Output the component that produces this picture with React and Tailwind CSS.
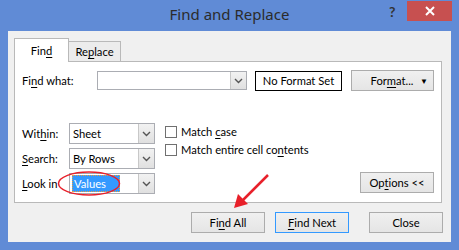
import React from 'react';

const U = ({ children }) => <span className="underline underline-offset-2">{children}</span>;

const Chevron = () => (
  <svg width="9" height="6" viewBox="0 0 9 6" fill="none" stroke="#555" strokeWidth="1.4">
    <path d="M1 1l3.5 3.5L8 1" />
  </svg>
);

const Select = ({ value, selected }) => (
  <div className="flex h-[21px] w-[86px] border border-[#abadb3] bg-white">
    <div className="flex flex-1 items-center pl-[2px]">
      {selected ? (
        <span className="h-[17px] w-[48px] border border-dotted border-[#e8a040] bg-[#3399ff] pl-[1px] leading-[15px] text-white">
          {value}
        </span>
      ) : (
        <span className="pl-[1px]">{value}</span>
      )}
    </div>
    <div className="flex w-[16px] items-center justify-center border-l border-[#c8c8c8] bg-gradient-to-b from-[#f2f2f2] to-[#e0e0e0]">
      <Chevron />
    </div>
  </div>
);

const Btn = ({ children, w = 'w-[74px]', focus }) => (
  <button
    className={`flex h-[21px] ${w} items-center justify-center border bg-gradient-to-b from-[#f0f0f0] to-[#e5e5e5] ${
      focus ? 'border-[#3399ff]' : 'border-[#acacac]'
    }`}
  >
    {children}
  </button>
);

const Check = ({ children }) => (
  <div className="flex h-[12px] items-center gap-[4px]">
    <div className="h-[12px] w-[12px] border border-[#707070] bg-white" />
    <span>{children}</span>
  </div>
);

export default function App() {
  return (
    <div
      className="relative h-[250px] w-[459px] bg-[#608bd6] text-[11.2px] leading-[16px] text-black"
      style={{ fontFamily: 'Lato, "Noto Sans", sans-serif' }}
    >
      {/* title bar */}
      <div className="relative flex h-[31px] items-center justify-center pb-[3px]">
        <span className="text-[15px] text-[#2b2b2b]" style={{ fontFamily: '"Noto Sans", sans-serif' }}>
          Find and Replace
        </span>
        <span className="absolute left-[389px] top-[4px] text-[14px] font-bold text-[#333]">?</span>
        <div className="absolute left-[407px] top-[1px] flex h-[20px] w-[45px] items-center justify-center bg-[#c75050]">
          <svg width="10" height="10" viewBox="0 0 10 10" stroke="white" strokeWidth="2">
            <path d="M1 1l8 8M9 1l-8 8" />
          </svg>
        </div>
      </div>

      {/* client */}
      <div className="mx-[8px] h-[211px] bg-[#f0f0f0] px-[6px] pt-[7px]">
        {/* tabs */}
        <div className="flex h-[23px] items-end">
          <div className="relative z-10 -mb-px flex h-[24px] w-[55px] items-center justify-center border border-b-0 border-[#b9b9b9] bg-white">
            Fin<U>d</U>
          </div>
          <div className="flex h-[20px] w-[52px] items-center justify-center border border-b-0 border-l-0 border-[#b9b9b9] bg-[#ececec]">
            Re<U>p</U>lace
          </div>
        </div>

        {/* panel */}
        <div className="h-[142px] w-[428px] border border-[#b9b9b9] bg-white px-[7px] pt-[8px]">
          <div className="flex items-center">
            <span className="w-[75px]">
              Fi<U>n</U>d what:
            </span>
            <div className="flex h-[19px] w-[150px] border border-[#abadb3] bg-white">
              <div className="flex-1" />
              <div className="flex w-[16px] items-center justify-center border-l border-[#c8c8c8] bg-gradient-to-b from-[#f2f2f2] to-[#e0e0e0]">
                <Chevron />
              </div>
            </div>
            <div className="ml-[8px] flex h-[20px] w-[87px] items-center justify-center border border-black">
              No Format Set
            </div>
            <Btn w="w-[83px] ml-[9px]">
              <span className="ml-[12px] flex-1 text-center">
                For<U>m</U>at...
              </span>
              <span className="mr-[5px] text-[8px]">▼</span>
            </Btn>
          </div>

          <div className="mt-[32px] flex">
            <div className="flex flex-col gap-[4px]">
              <div className="flex items-center">
                <span className="w-[47px]">
                  Wit<U>h</U>in:
                </span>
                <Select value="Sheet" />
              </div>
              <div className="flex items-center">
                <span className="w-[47px]">
                  <U>S</U>earch:
                </span>
                <Select value="By Rows" />
              </div>
              <div className="flex items-center">
                <span className="w-[47px]">
                  <U>L</U>ook in
                </span>
                <Select value="Values" selected />
              </div>
            </div>

            <div className="ml-[10px] flex flex-col gap-[6px] pt-[3px]">
              <Check>
                Match <U>c</U>ase
              </Check>
              <Check>
                Match entire cell co<U>n</U>tents
              </Check>
            </div>

            <div className="ml-auto flex items-end pb-px">
              <Btn>
                Op<U>t</U>ions &lt;&lt;
              </Btn>
            </div>
          </div>
        </div>

        {/* bottom buttons */}
        <div className="mt-[9px] flex justify-end gap-[10px] pr-[2px]">
          <Btn>
            Fi<U>n</U>d All
          </Btn>
          <Btn focus>
            <U>F</U>ind Next
          </Btn>
          <Btn w="w-[74px] ml-[10px]">Close</Btn>
        </div>
      </div>

      {/* annotations */}
      <svg className="pointer-events-none absolute left-0 top-0" width="459" height="250">
        <ellipse cx="89" cy="183.5" rx="30.5" ry="11.5" fill="none" stroke="#e8202a" strokeWidth="1.5" />
        <line x1="268" y1="175" x2="243" y2="200" stroke="#e8202a" strokeWidth="2.5" />
        <polygon points="234,208 238,194 248,204" fill="#e8202a" />
      </svg>
    </div>
  );
}
